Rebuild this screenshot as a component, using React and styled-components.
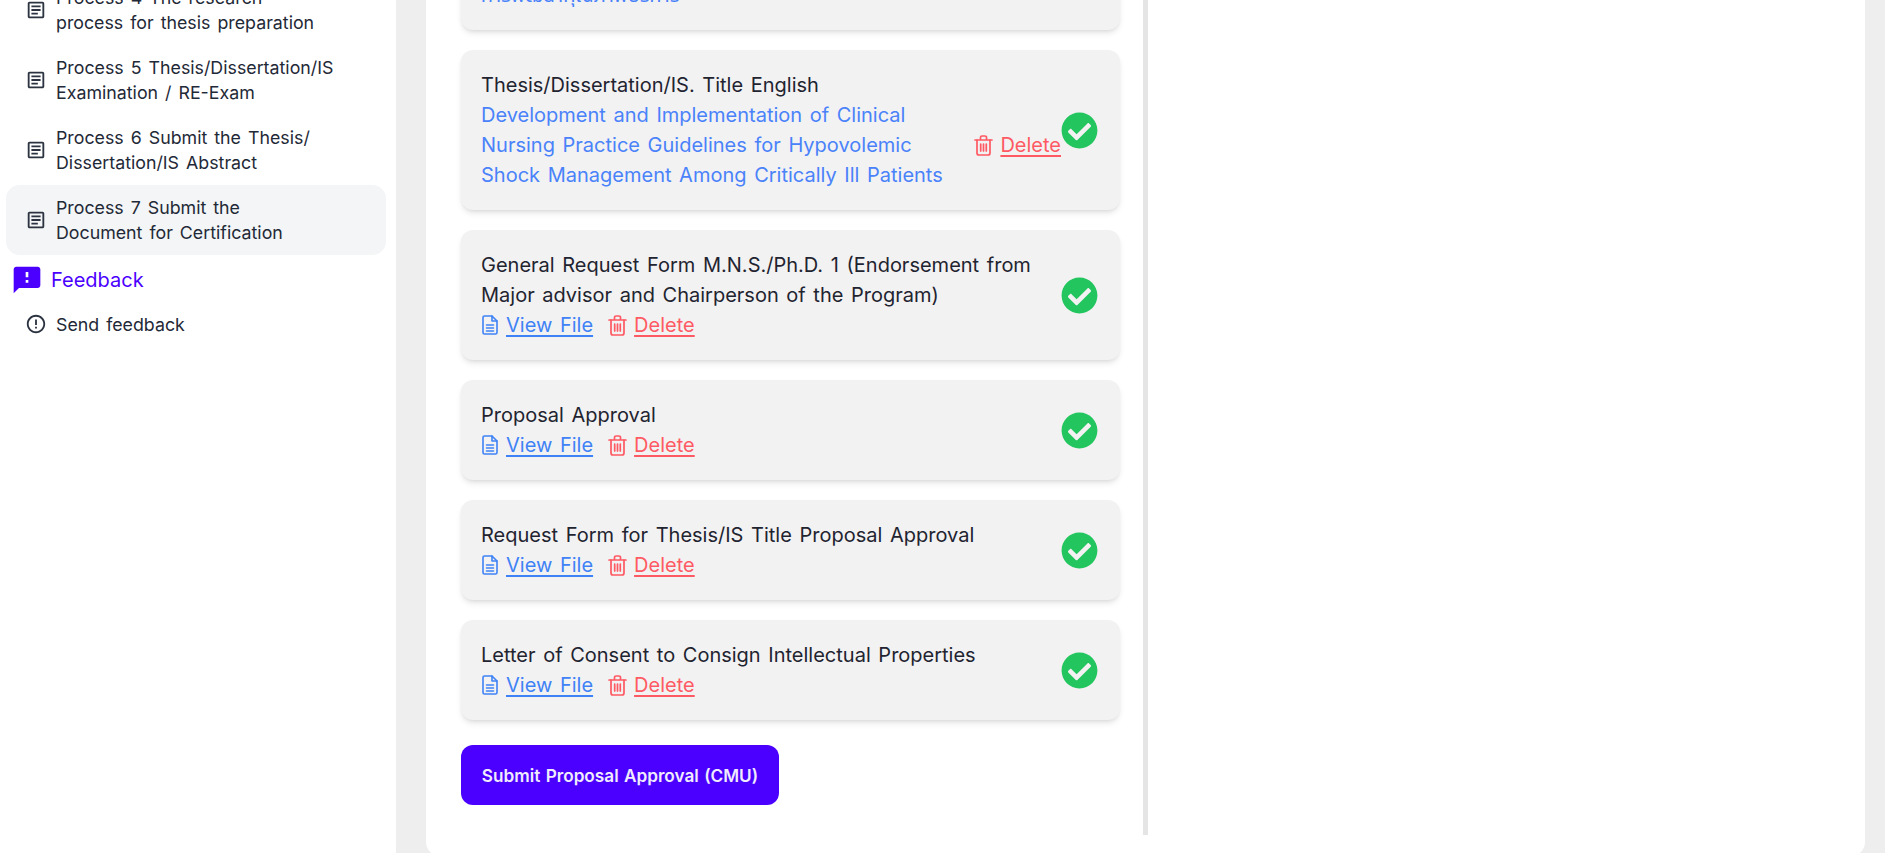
import React from 'react'
import styled, { createGlobalStyle } from 'styled-components'
import { FaCheckCircle } from 'react-icons/fa'
import { MdOutlineArticle, MdFeedback, MdErrorOutline } from 'react-icons/md'

const GlobalStyle = createGlobalStyle`
  html, body {
    margin: 0;
    padding: 0;
    height: 853px;
    overflow: hidden;
    background: #eeeeee;
    font-family: "Inter", "Noto Sans", "Noto Sans Thai", sans-serif;
  }
  * { box-sizing: border-box; }
`

const Page = styled.div`
  display: flex;
  width: 1885px;
  height: 853px;
  overflow: hidden;
`

const Sidebar = styled.aside`
  width: 396px;
  flex-shrink: 0;
  background: #ffffff;
  padding: 0 10px 0 6px;
  overflow: hidden;
`

// list is scrolled a little, process 4 gets cut by the top of the window
const NavList = styled.nav`
  margin-top: -25px;
  display: flex;
  flex-direction: column;
`

const NavItem = styled.a`
  display: flex;
  align-items: center;
  gap: 9px;
  min-height: ${(p) => (p.$single ? '50px' : '70px')};
  padding: 0 16px 0 19px;
  border-radius: 14px;
  background: ${(p) => (p.$active ? '#f3f5f6' : 'transparent')};
  color: #1f2937;
  font-size: 17.8px;
  font-weight: 400;
  line-height: 25px;
  word-spacing: 2px;
`

const NavIcon = styled.span`
  display: flex;
  flex-shrink: 0;
  width: 22px;
  justify-content: center;
  color: #2b3240;
  font-size: 22px;
`

const SectionTitle = styled.div`
  display: flex;
  align-items: center;
  gap: 8px;
  height: 44px;
  padding: 6px 0 0 2px;
  color: #4b00ff;
  font-size: 20px;
  font-weight: 400;
  svg { font-size: 32px; margin-left: 3px; }
`

const Main = styled.main`
  flex: 1;
  height: 853px;
  display: flex;
  flex-direction: column;
  justify-content: flex-end;
  padding: 0 20px 0 30px;
  overflow: hidden;
`

const Panel = styled.section`
  flex-shrink: 0;
  background: #ffffff;
  border-radius: 0 0 14px 14px;
  margin-bottom: -3px;
  padding-bottom: 21px;
`

const Column = styled.div`
  width: 722px;
  padding: 0 23px 30px 35px;
  border-right: 5px solid #e5e5e5;
  display: flex;
  flex-direction: column;
`

const CardList = styled.div`
  display: flex;
  flex-direction: column;
  gap: 20px;
`

const Card = styled.div`
  display: flex;
  align-items: center;
  justify-content: space-between;
  padding: 20px 22px 20px 20px;
  background: #f2f2f2;
  border-radius: 12px;
  box-shadow: 0 4px 6px -1px rgba(0, 0, 0, 0.1), 0 2px 4px -2px rgba(0, 0, 0, 0.1);
  font-size: 20px;
  font-weight: 400;
  line-height: 30px;
  word-spacing: 2px;
  color: #1f2430;
`

const CardBody = styled.div`
  flex: 1;
  min-width: 0;
`

const TitleRow = styled.div`
  display: flex;
  align-items: center;
  justify-content: space-between;
`

const BlueText = styled.div`
  color: #4a82fa;
  max-width: 480px;
`

const LinkRow = styled.div`
  display: flex;
  align-items: center;
  gap: 15px;
`

const FileLink = styled.a`
  display: inline-flex;
  align-items: center;
  gap: 7px;
  color: ${(p) => (p.$danger ? '#ff5a63' : '#3f82f6')};
  span {
    text-decoration: underline;
    text-decoration-thickness: 2px;
    text-underline-offset: 3px;
  }
`

const CheckIcon = styled(FaCheckCircle)`
  flex-shrink: 0;
  color: #22c55e;
  font-size: 37px;
`

const SubmitButton = styled.button`
  align-self: flex-start;
  margin-top: 25px;
  width: 318px;
  height: 60px;
  border: none;
  border-radius: 12px;
  background: #4b00ff;
  color: #f0ebff;
  font-family: inherit;
  font-size: 17.2px;
  font-weight: 600;
  word-spacing: 1px;
`

const DocIcon = () => (
  <svg width="18" height="20" viewBox="0 0 18 20" fill="none" stroke="currentColor" strokeWidth="1.6" strokeLinejoin="round" strokeLinecap="round">
    <path d="M2 2.5a1.5 1.5 0 0 1 1.5-1.5H11l5 5v11.5a1.5 1.5 0 0 1-1.5 1.5h-11A1.5 1.5 0 0 1 2 17.5z" />
    <path d="M11 1v5h5M5.5 10h7M5.5 13h7M5.5 16h7" />
  </svg>
)

const TrashIcon = () => (
  <svg width="19" height="21" viewBox="0 0 19 21" fill="none" stroke="currentColor" strokeWidth="1.7" strokeLinejoin="round" strokeLinecap="round">
    <path d="M1 5h17M6.5 5V2.5A1.5 1.5 0 0 1 8 1h3a1.5 1.5 0 0 1 1.5 1.5V5" />
    <path d="M3 5v13a2 2 0 0 0 2 2h9a2 2 0 0 0 2-2V5" />
    <path d="M6.7 9v7M9.5 9v7M12.3 9v7" />
  </svg>
)

const navItems = [
  ['Process 4 The research', 'process for thesis preparation'],
  ['Process 5 Thesis/Dissertation/IS', 'Examination / RE-Exam'],
  ['Process 6 Submit the Thesis/', 'Dissertation/IS Abstract'],
  ['Process 7 Submit the', 'Document for Certification'],
]

const documents = [
  ['General Request Form M.N.S./Ph.D. 1 (Endorsement from', 'Major advisor and Chairperson of the Program)'],
  ['Proposal Approval'],
  ['Request Form for Thesis/IS Title Proposal Approval'],
  ['Letter of Consent to Consign Intellectual Properties'],
]

const DeleteLink = () => (
  <FileLink $danger>
    <TrashIcon />
    <span>Delete</span>
  </FileLink>
)

const App = () => {
  return (
    <Page>
      <GlobalStyle />
      <Sidebar>
        <NavList>
          {navItems.map((lines, i) => (
            <NavItem key={i} $active={i === 3}>
              <NavIcon><MdOutlineArticle /></NavIcon>
              <div>{lines[0]}<br />{lines[1]}</div>
            </NavItem>
          ))}
          <SectionTitle>
            <MdFeedback />
            Feedback
          </SectionTitle>
          <NavItem $single>
            <NavIcon><MdErrorOutline /></NavIcon>
            <div>Send feedback</div>
          </NavItem>
        </NavList>
      </Sidebar>

      <Main>
        <Panel>
          <Column>
            <CardList>
              <Card>
                <CardBody>
                  <div>Thesis/Dissertation/IS. Title Thai</div>
                  <BlueText>การพัฒนาคุณภาพบริการ</BlueText>
                </CardBody>
                <CheckIcon />
              </Card>

              <Card>
                <CardBody>
                  <div>Thesis/Dissertation/IS. Title English</div>
                  <TitleRow>
                    <BlueText>
                      Development and Implementation of Clinical Nursing Practice Guidelines for Hypovolemic Shock Management Among Critically Ill Patients
                    </BlueText>
                    <DeleteLink />
                  </TitleRow>
                </CardBody>
                <CheckIcon />
              </Card>

              {documents.map((lines, i) => (
                <Card key={i}>
                  <CardBody>
                    {lines.map((line) => <div key={line}>{line}</div>)}
                    <LinkRow>
                      <FileLink>
                        <DocIcon />
                        <span>View File</span>
                      </FileLink>
                      <DeleteLink />
                    </LinkRow>
                  </CardBody>
                  <CheckIcon />
                </Card>
              ))}
            </CardList>
            <SubmitButton>Submit Proposal Approval (CMU)</SubmitButton>
          </Column>
        </Panel>
      </Main>
    </Page>
  )
}

export default App
